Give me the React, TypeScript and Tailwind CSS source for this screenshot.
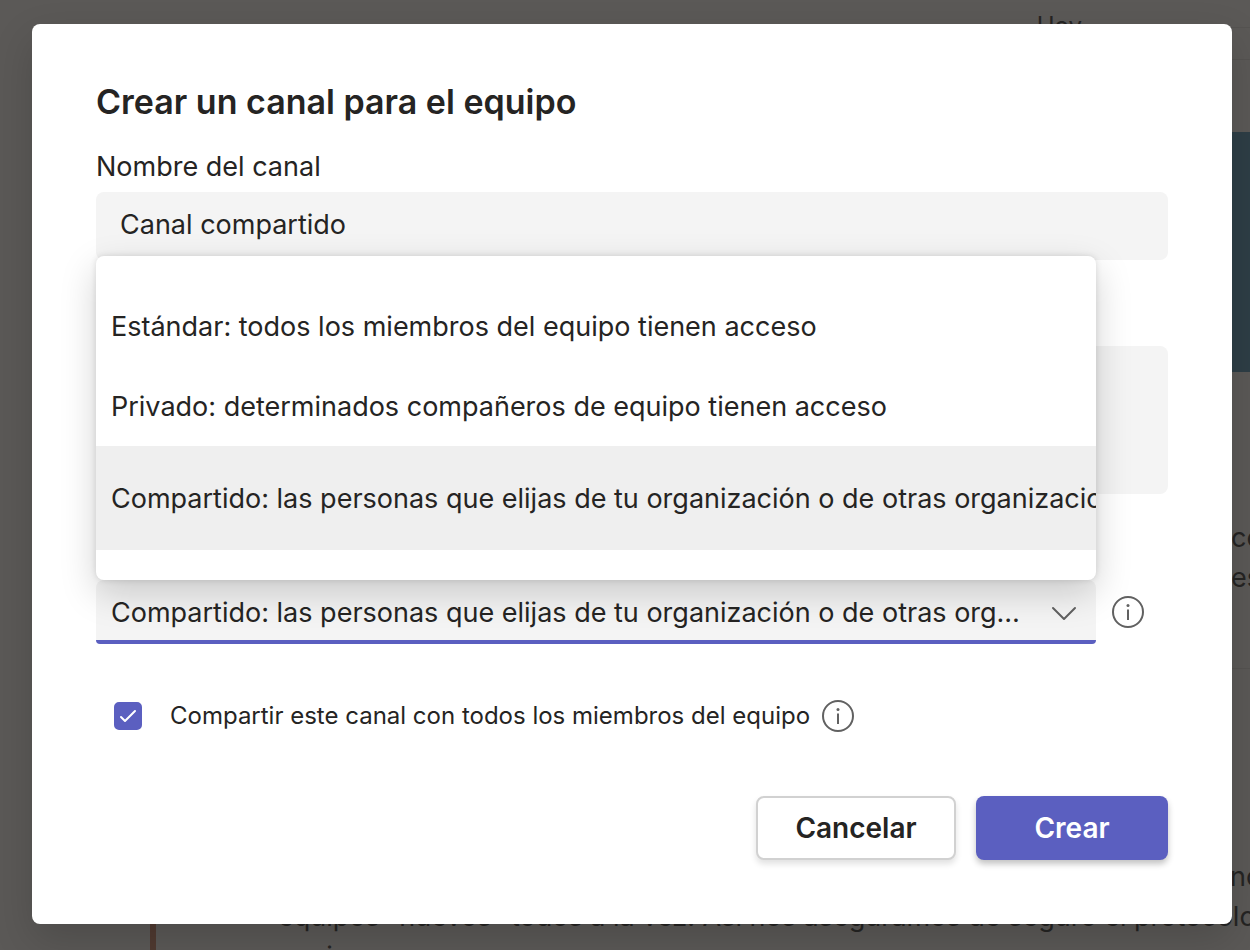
import { useState } from "react";

const channelTypes = [
  { value: "standard", label: "Estándar: todos los miembros del equipo tienen acceso", row: "h-20" },
  { value: "private", label: "Privado: determinados compañeros de equipo tienen acceso", row: "h-20" },
  {
    value: "shared",
    label: "Compartido: las personas que elijas de tu organización o de otras organizaciones tienen acceso",
    row: "h-[104px]",
  },
];

function InfoIcon() {
  return (
    <svg viewBox="0 0 32 32" className="size-8" fill="none" stroke="#616161" strokeWidth="2" aria-hidden="true">
      <circle cx="16" cy="16" r="15" />
      <path d="M16 13.5V24" />
      <circle cx="16" cy="9.5" r="1.5" fill="#616161" stroke="none" />
    </svg>
  );
}

function Conversation() {
  return (
    <div className="flex h-full flex-col overflow-hidden bg-[#5b5957] text-[27px] leading-10 text-[#252423]" aria-hidden="true">
      <div className="flex h-[60px] shrink-0 items-start justify-end">
        <span className="mr-6 pt-2 text-2xl leading-9">Hoy</span>
        <span className="mt-[27px] h-[33px] w-36 border-y border-[#555351]" />
      </div>
      <div className="mt-[72px] h-60 w-12 shrink-0 self-end bg-[#2e3e46]" />
      <div className="mt-[146px] ml-[1231px] flex h-[151px] shrink-0 flex-col overflow-hidden border-b border-[#555351] whitespace-nowrap">
        <span>comentario</span>
        <span>espacio</span>
      </div>
      <div className="mt-[188px] ml-[150px] shrink-0 border-l-[6px] border-[#503a31] whitespace-nowrap">
        <p className="pl-[1074px]">nos</p>
        <p className="pl-[122px]">equipos “nuevos” todos a la vez. Así nos aseguramos de seguro el protocolo</p>
        <p className="pl-[122px]">equipo.</p>
      </div>
    </div>
  );
}

export default function App() {
  const [name, setName] = useState("Canal compartido");
  const [kind, setKind] = useState("shared");
  const [shareAll, setShareAll] = useState(true);

  return (
    <div className="relative min-h-screen overflow-hidden bg-[#5b5957] font-['Inter',sans-serif] text-[27px] leading-10 text-[#252423]">
      <div className="absolute inset-0">
        <Conversation />
      </div>
      <div className="relative pt-6 pr-[18px] pb-6 pl-8">
        <form
          role="dialog"
          aria-labelledby="dialog-title"
          onSubmit={(event) => event.preventDefault()}
          className="flex flex-col rounded-lg bg-white px-16 pt-[54px] pb-16 shadow-[0_16px_40px_rgba(0,0,0,0.16)]"
        >
          <h1 id="dialog-title" className="text-[34px] leading-12 font-semibold">
            Crear un canal para el equipo
          </h1>
          <label htmlFor="channel-name" className="mt-[21px]">
            Nombre del canal
          </label>
          <input
            id="channel-name"
            value={name}
            onChange={(event) => setName(event.target.value)}
            className="mt-[5px] h-[68px] w-full rounded-lg bg-[#f4f4f4] px-6 pb-1 outline-none"
          />
          <textarea
            aria-label="Descripción"
            className="mt-[86px] h-[148px] w-full resize-none rounded-lg bg-[#f4f4f4] px-6 py-3 outline-none"
          />
          <div className="mt-[86px] flex items-center gap-4 pr-6">
            <div className="relative min-w-0 grow">
              <select
                aria-label="Privacidad"
                value={kind}
                onChange={(event) => setKind(event.target.value)}
                className="block h-16 w-full appearance-none truncate rounded-t-lg rounded-b-sm bg-[linear-gradient(to_top,#5b5fc0_4px,#f4f4f4_4px)] pt-[2px] pr-[68px] pl-[15px] outline-none"
              >
                {channelTypes.map((item) => (
                  <option key={item.value} value={item.value}>
                    {item.label}
                  </option>
                ))}
              </select>
              <svg
                viewBox="0 0 26 16"
                className="pointer-events-none absolute top-[26px] right-[19px] h-4 w-[26px]"
                fill="none"
                stroke="#616161"
                strokeWidth="2"
                strokeLinecap="round"
                strokeLinejoin="round"
                aria-hidden="true"
              >
                <path d="M2 2l11 11L24 2" />
              </svg>
              <ul
                role="listbox"
                aria-label="Privacidad"
                className="absolute bottom-full left-0 w-full overflow-hidden rounded-lg bg-white pt-[30px] pb-[30px] shadow-[0_13px_36px_rgba(0,0,0,0.18),0_0_6px_rgba(0,0,0,0.12)]"
              >
                {channelTypes.map((item) => (
                  <li
                    key={item.value}
                    role="option"
                    aria-selected={item.value === kind}
                    onClick={() => setKind(item.value)}
                    className={`flex items-center pt-[2px] pl-[15px] whitespace-nowrap aria-selected:bg-[#efefef] ${item.row}`}
                  >
                    {item.label}
                  </li>
                ))}
              </ul>
            </div>
            <button type="button" aria-label="Información sobre la privacidad">
              <InfoIcon />
            </button>
          </div>
          <div className="mt-[52px] flex items-center gap-3 pl-[18px] text-2xl leading-10">
            <label className="flex items-center gap-7">
              <span className="relative size-7">
                <input
                  type="checkbox"
                  checked={shareAll}
                  onChange={(event) => setShareAll(event.target.checked)}
                  className="peer block size-7 appearance-none rounded-[5px] border-2 border-[#5b5fc0] checked:bg-[#5b5fc0]"
                />
                <svg
                  viewBox="0 0 28 28"
                  className="pointer-events-none absolute inset-0 hidden size-7 peer-checked:block"
                  fill="none"
                  stroke="white"
                  strokeWidth="2"
                  strokeLinecap="round"
                  strokeLinejoin="round"
                  aria-hidden="true"
                >
                  <path d="M7 15l4 4L21 9" />
                </svg>
              </span>
              Compartir este canal con todos los miembros del equipo
            </label>
            <button type="button" aria-label="Información sobre compartir">
              <InfoIcon />
            </button>
          </div>
          <div className="mt-[60px] flex justify-end gap-5 text-[28px] font-semibold">
            <button
              type="button"
              className="h-16 w-50 rounded-lg border-2 border-[#d1d1d1] bg-white shadow-[0_4px_6px_rgba(0,0,0,0.12)]"
            >
              Cancelar
            </button>
            <button type="submit" className="h-16 w-48 rounded-lg bg-[#5b5fc0] text-white shadow-[0_4px_6px_rgba(0,0,0,0.24)]">
              Crear
            </button>
          </div>
        </form>
      </div>
    </div>
  );
}
